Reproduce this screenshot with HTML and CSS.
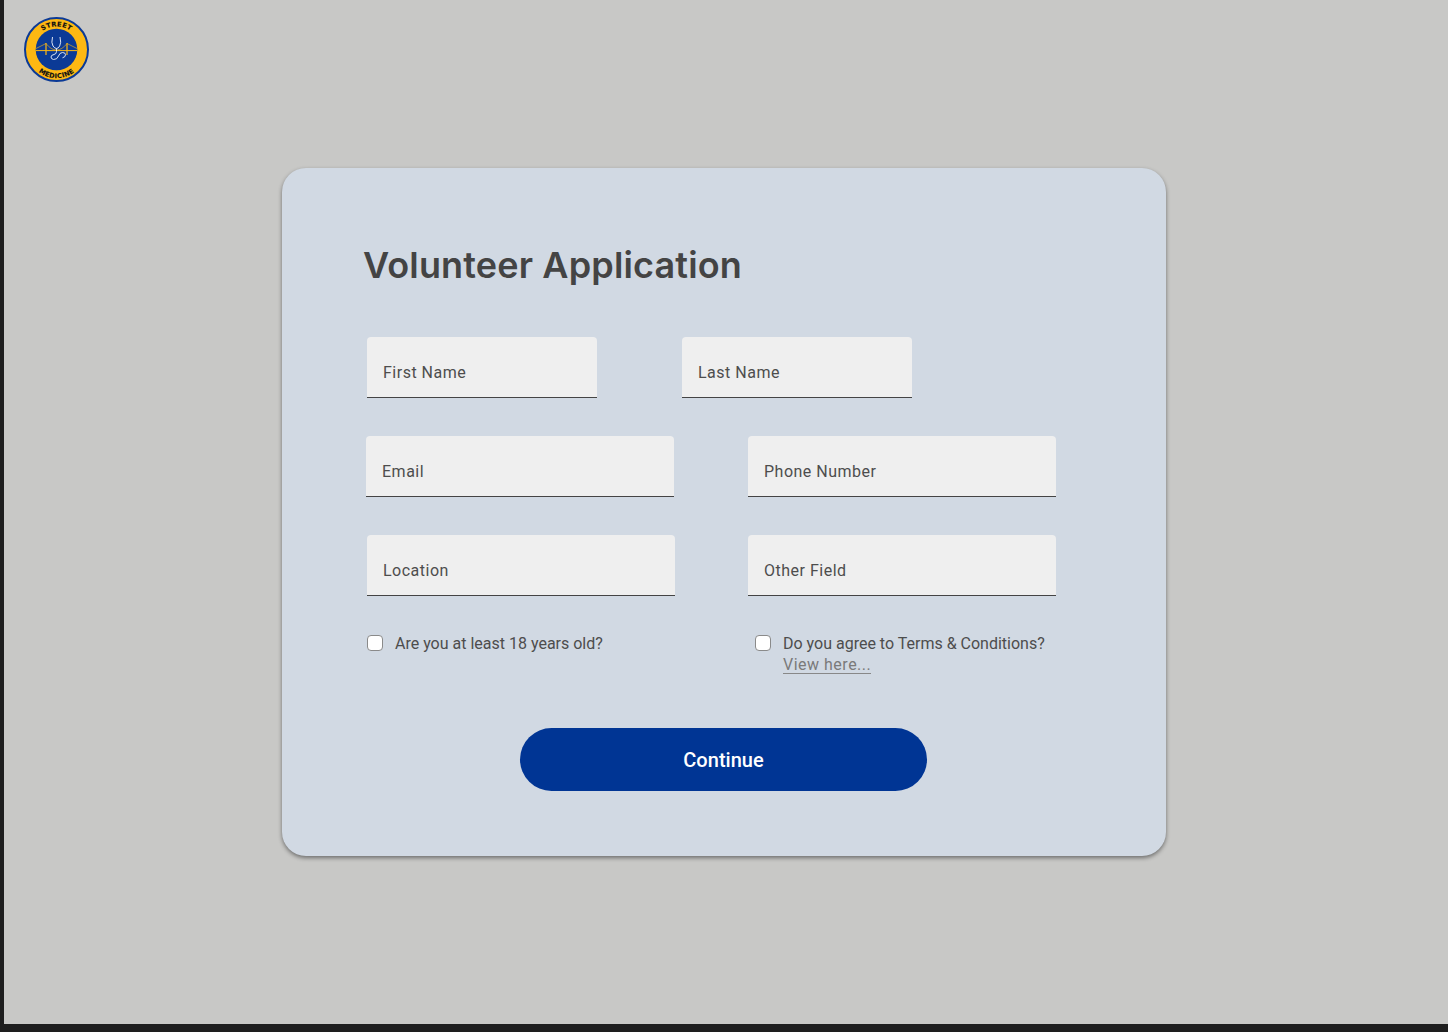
FILE: index.html
```html
<!DOCTYPE html>
<html lang="en">
<head>
  <meta charset="UTF-8">
  <title>Volunteer Application</title>
  <link rel="stylesheet" href="styles.css">
</head>
<body>
  <div class="canvas">
    <header class="top">
      <svg class="logo" viewBox="0 0 65 65" role="img" aria-label="Street Medicine">
        <defs>
          <path id="arcTop" d="M9.300 32.500a23.200 23.200 0 0 1 46.400 0"/>
          <path id="arcBottom" d="M3.800 32.500a28.700 28.700 0 0 0 57.400 0"/>
        </defs>
        <circle cx="32.500" cy="32.500" r="31.500" fill="#fdb813" stroke="#0b3a96" stroke-width="2"/>
        <circle cx="32.500" cy="32.500" r="20.800" fill="#0b3a96"/>
        <text class="logo-text"><textPath href="#arcTop" startOffset="50%" text-anchor="middle">STREET</textPath></text>
        <text class="logo-text"><textPath href="#arcBottom" startOffset="50%" text-anchor="middle">MEDICINE</textPath></text>
        <g fill="none" stroke="#fdb813">
          <path d="M12 33.600h41" stroke-width="1"/>
          <path d="M22 26v12M43 26v12" stroke-width="1.200"/>
          <path d="M12 31.500L22 26.500Q27 33 32.500 33T43 26.500L53 31.500" stroke-width="0.600"/>
        </g>
        <g fill="none" stroke="#f2f5fa" stroke-width="0.900">
          <path d="M28.500 20q-1.500 6 .5 9 1.700 2.500 3.500 2.500 1.800 0 3.200-2.500 1.800-3 .3-9"/>
          <path d="M32.500 31.500v3q0 2.500-2.500 3-3 .5-3 2.500t2.500 2.500q3.500 .3 5-3.500 1.200-3.500 4-3.500 3 0 3 2.300t-3 3"/>
        </g>
      </svg>
    </header>

    <main class="card">
      <h1 class="title">Volunteer Application</h1>
      <form class="form">
        <div class="row row-names">
          <label class="field field-short"><span>First Name</span></label>
          <label class="field field-short"><span>Last Name</span></label>
        </div>
        <div class="row row-contact">
          <label class="field"><span>Email</span></label>
          <label class="field"><span>Phone Number</span></label>
        </div>
        <div class="row row-other">
          <label class="field"><span>Location</span></label>
          <label class="field"><span>Other Field</span></label>
        </div>
        <div class="row row-checks">
          <label class="check check-age">
            <span class="box"></span>
            <span>Are you at least 18 years old?</span>
          </label>
          <label class="check check-terms">
            <span class="box"></span>
            <span>Do you agree to Terms &amp; Conditions?<br><a class="view-link" href="#">View here...</a></span>
          </label>
        </div>
        <button class="continue" type="button">Continue</button>
      </form>
    </main>
  </div>
</body>
</html>
```

FILE: styles.css
```css
* {
  box-sizing: border-box;
}
body {
  margin: 0;
  height: 1032px;
  overflow: hidden;
  padding: 0 0 8px 4px;
  background: #1e1e1e;
  font-family: Roboto, Arial, sans-serif;
  color: #4d4d4d;
}
.canvas {
  height: 100%;
  background: #c8c8c6;
  display: flex;
  flex-direction: column;
}
.top {
  height: 168px;
  padding: 17px 0 0 20px;
}
.logo {
  display: block;
  width: 65px;
  height: 65px;
}
.logo-text {
  font-family: "DejaVu Sans", sans-serif;
  font-weight: 700;
  font-size: 6.600px;
  letter-spacing: 0.3px;
  fill: #111;
  stroke: #111;
  stroke-width: 0.15px;
}
.card {
  width: 884px;
  height: 688px;
  margin-left: 278px;
  padding: 72px 82px 0;
  background: #d1d9e3;
  border-radius: 24px;
  box-shadow: 0 2px 4px rgba(0,0,0,0.45);
}
.title {
  margin: 0 0 0 -1px;
  height: 50px;
  font-family: Inter, sans-serif;
  font-size: 36px;
  line-height: 50px;
  font-weight: 600;
  letter-spacing: 0.15px;
  color: #444;
}
.form {
  margin-top: 47px;
}
.row {
  display: flex;
  margin-bottom: 38px;
}
.row-names {
  gap: 85px;
  padding-left: 3px;
}
.row-contact {
  gap: 74px;
  padding-left: 2px;
}
.row-other {
  gap: 73px;
  padding-left: 3px;
  margin-bottom: 37px;
}
.field {
  width: 308px;
  height: 61px;
  padding: 26px 16px 0;
  background: #efefef;
  border-bottom: 1px solid #444;
  border-radius: 4px 4px 0 0;
  font-size: 16px;
  line-height: 20px;
  letter-spacing: 0.5px;
}
.field-short {
  width: 230px;
}
.row-checks {
  height: 54px;
  margin-bottom: 0;
  padding-left: 3px;
}
.check {
  display: flex;
  gap: 12px;
  font-size: 16px;
  line-height: 21px;
}
.check-age {
  width: 388px;
}
.box {
  flex: none;
  width: 16px;
  height: 16px;
  margin-top: 2px;
  background: #fff;
  border: 1px solid #8a8a8a;
  border-radius: 4px;
}
.view-link {
  display: inline-block;
  line-height: 17px;
  color: #7a7a7a;
  text-decoration: none;
  border-bottom: 1px solid #888;
  letter-spacing: 0.5px;
}
.continue {
  display: block;
  width: 407px;
  height: 63px;
  margin: 41px 0 0 156px;
  background: #003594;
  border: none;
  border-radius: 32px;
  font-family: Roboto, Arial, sans-serif;
  font-size: 20px;
  font-weight: 500;
  letter-spacing: 0.02px;
  color: #fff;
  cursor: pointer;
}
```
